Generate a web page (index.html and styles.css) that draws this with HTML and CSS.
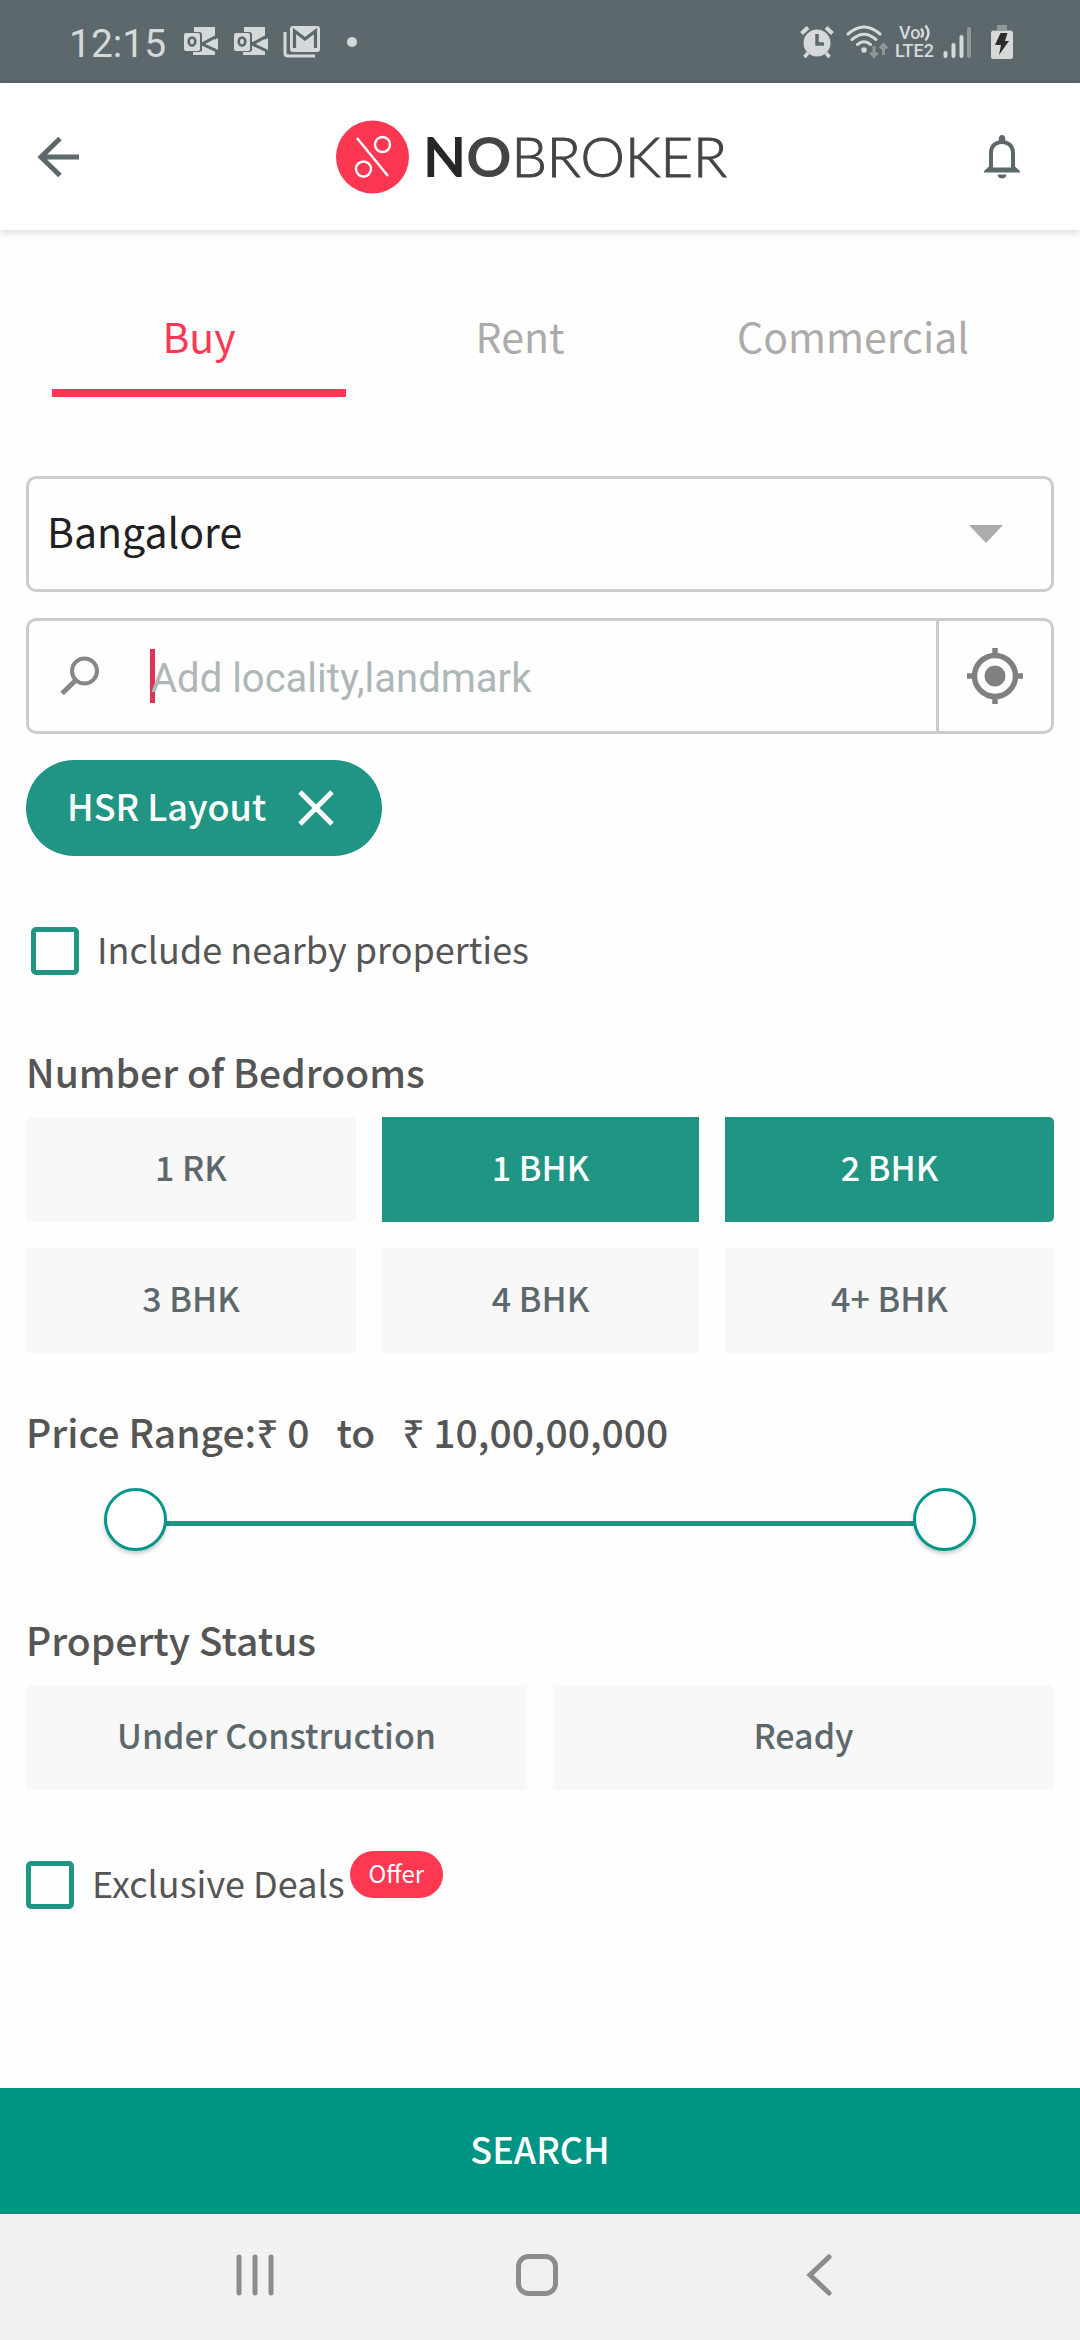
FILE: index.html
```html
<!DOCTYPE html>
<html lang="en">
<head>
<meta charset="utf-8">
<meta name="viewport" content="width=device-width, initial-scale=1">
<title>NoBroker - Search</title>
<link rel="stylesheet" href="styles.css">
</head>
<body>
<svg width="0" height="0" class="defs" aria-hidden="true">
  <symbol id="outlook" viewBox="0 0 36 32">
    <path d="M11 1H32V29H10V25H19V8H11z" fill="#d5d9da"/>
    <path d="M36 9L19 18L36 26" fill="none" stroke="#5d686c" stroke-width="3"/>
    <path d="M25 18L35 12V24z" fill="#d5d9da"/>
    <rect x="0" y="6" width="19" height="20" rx="3" fill="#5d686c"/>
    <rect x="1" y="7" width="16" height="18" rx="2" fill="#d5d9da"/>
    <ellipse cx="9" cy="15.500" rx="3.300" ry="4" fill="none" stroke="#5d686c" stroke-width="2.600"/>
  </symbol>
</svg>
<div class="app">
  <div class="status">
    <div class="status-left">
      <span class="clock">12:15</span>
      <svg class="notif" width="36" height="32" viewBox="0 0 36 32" aria-hidden="true"><use href="#outlook"/></svg>
      <svg class="notif" width="36" height="32" viewBox="0 0 36 32" aria-hidden="true"><use href="#outlook"/></svg>
      <svg class="gmail" width="38" height="34" viewBox="0 0 38 34" aria-hidden="true">
        <path d="M2 7v21q0 3 3 3h27" fill="none" stroke="#d5d9da" stroke-width="3"/>
        <rect x="7" y="1" width="30" height="26" rx="3" fill="#d5d9da"/>
        <path d="M11.500 23V6L22 14L32.500 6V23" fill="none" stroke="#5d686c" stroke-width="3.200"/>
      </svg>
      <span class="dot"></span>
    </div>
    <div class="status-right">
      <svg width="34" height="34" viewBox="0 0 34 34" aria-hidden="true">
        <path d="M8 28L4.500 32M26 28L29.500 32" stroke="#d5d9da" stroke-width="3.500"/>
        <circle cx="17" cy="18" r="13.500" fill="#d5d9da"/>
        <path d="M1.500 8.500L8 2.500M32.500 8.500L26 2.500" stroke="#d5d9da" stroke-width="4"/>
        <path d="M17 9V19H24" fill="none" stroke="#5d686c" stroke-width="3.500"/>
      </svg>
      <svg class="wifi" width="42" height="34" viewBox="0 0 42 34" aria-hidden="true">
        <g fill="none" stroke="#d5d9da" stroke-width="3" stroke-linecap="round">
          <path d="M2 9Q18-5 34 9M6 14.500Q18 4 30 14.500M11.500 19.500Q18 14 24.500 19.500"/>
        </g>
        <circle cx="18" cy="25" r="2.800" fill="#d5d9da"/>
        <path d="M28 21v10M24.500 27.500l3.500 4l3.500-4M37.500 30V20M34 23.500l3.500-4l3.500 4" fill="none" stroke="#8f9799" stroke-width="3"/>
      </svg>
      <span class="lte"><span class="volte">Vo<svg width="11" height="18" viewBox="0 0 11 18" aria-hidden="true"><path d="M1 4.500q4 4.500 0 9M5.500 1.500q6 7.500 0 15" fill="none" stroke="#d5d9da" stroke-width="2.500"/></svg></span><span>LTE2</span></span>
      <svg class="signal" width="28" height="34" viewBox="0 0 28 34" aria-hidden="true">
        <g stroke-width="4" stroke-linecap="round">
          <path d="M2.500 28v3M10.500 20v11M18.500 12v19" stroke="#d5d9da"/>
          <path d="M26 4v27" stroke="#8f9799"/>
        </g>
      </svg>
      <svg class="battery" width="22" height="34" viewBox="0 0 22 34" aria-hidden="true">
        <path d="M6 0h10v5h5v4H1V5h5z" fill="#8f9799"/>
        <rect x="0" y="6" width="22" height="28" rx="2" fill="#d5d9da"/>
        <path d="M9.500 8h7l-2.500 8h4L8 30l2-10H4z" fill="#2b2b2b"/>
      </svg>
    </div>
  </div>

  <header class="header">
    <button class="icon-btn" type="button" aria-label="Back">
      <svg width="42" height="42" viewBox="0 0 42 42"><path d="M23 2.500L4 21L23 39.500M4 21H42" fill="none" stroke="#5d686c" stroke-width="5"/></svg>
    </button>
    <div class="brand">
      <svg width="73" height="74" viewBox="0 0 73 74" aria-hidden="true">
        <circle cx="36.500" cy="37" r="36.500" fill="#fd3752"/>
        <g fill="none" stroke="#fff" stroke-width="2.400"><path d="M21 18L52 56"/><circle cx="46.500" cy="24.500" r="7.500"/><circle cx="27.500" cy="49" r="7.500"/></g>
      </svg>
      <span class="brand-name"><b class="brand-n">N</b><b class="brand-o">O</b>BROKER</span>
    </div>
    <button class="icon-btn" type="button" aria-label="Notifications">
      <svg width="36" height="44" viewBox="0 0 36 44"><path fill="#5d686c" fill-rule="evenodd" d="M18 0c2 0 3.200 1.500 3.200 3.500V5.500C27 6.500 31 11 31 18V31.500L36 36V37.500H0V36L5 31.500V18C5 11 9 6.500 14.800 5.500V3.500C14.800 1.500 16 0 18 0zM9 32.500H27V18C27 12.500 23.500 9 18 9S9 12.500 9 18zM13.500 39.500H22.500C22 42.500 20 43.500 18 43.500S14 42.500 13.500 39.500z"/></svg>
    </button>
  </header>

  <main class="content">
    <div class="tabs" role="tablist">
      <button class="tab tab-active" type="button" role="tab" aria-selected="true">Buy</button>
      <button class="tab" type="button" role="tab" aria-selected="false">Rent</button>
      <button class="tab" type="button" role="tab" aria-selected="false">Commercial</button>
    </div>

    <div class="field city">
      <select class="city-select" aria-label="City"><option>Bangalore</option></select>
      <svg width="34" height="18" viewBox="0 0 34 18" aria-hidden="true"><path d="M0 0H34L17 18z" fill="#acacac"/></svg>
    </div>

    <div class="field locality">
      <svg width="40" height="40" viewBox="0 0 40 40" aria-hidden="true"><circle cx="24.500" cy="15" r="12.500" fill="none" stroke="#85868a" stroke-width="4"/><path d="M15.500 24.500L2 37.500" stroke="#85868a" stroke-width="5"/></svg>
      <span class="caret"></span>
      <input class="locality-input" type="text" aria-label="Locality" placeholder="Add locality,landmark">
      <button class="locate" type="button" aria-label="Use my location">
        <svg width="56" height="56" viewBox="0 0 56 56"><g fill="none" stroke="#808080" stroke-width="5.500"><circle cx="28" cy="28" r="20.500"/><path d="M28 0V7M28 49V56M0 28H7M49 28H56"/></g><circle cx="28" cy="28" r="10.500" fill="#808080"/></svg>
      </button>
    </div>

    <button class="chip" type="button">
      <span>HSR Layout</span>
      <svg width="36" height="36" viewBox="0 0 36 36" aria-label="Remove"><path d="M2 2L34 34M34 2L2 34" stroke="#fff" stroke-width="5"/></svg>
    </button>

    <label class="check nearby"><input type="checkbox"><span>Include nearby properties</span></label>

    <h2 class="heading bedrooms-heading">Number of Bedrooms</h2>
    <div class="options three">
      <button class="option first" type="button" aria-pressed="false">1 RK</button>
      <button class="option" type="button" aria-pressed="true">1 BHK</button>
      <button class="option last" type="button" aria-pressed="true">2 BHK</button>
      <button class="option first" type="button" aria-pressed="false">3 BHK</button>
      <button class="option" type="button" aria-pressed="false">4 BHK</button>
      <button class="option last" type="button" aria-pressed="false">4+ BHK</button>
    </div>

    <h2 class="heading price-heading">Price Range:₹ 0<span class="to">to</span>₹ 10,00,00,000</h2>
    <div class="slider">
      <input type="range" aria-label="Minimum price" min="0" max="100000000" value="0">
      <input type="range" aria-label="Maximum price" min="0" max="100000000" value="100000000">
    </div>

    <h2 class="heading status-heading">Property Status</h2>
    <div class="options two">
      <button class="option first" type="button" aria-pressed="false">Under Construction</button>
      <button class="option last" type="button" aria-pressed="false">Ready</button>
    </div>

    <div class="deals">
      <label class="check"><input type="checkbox"><span>Exclusive Deals</span></label>
      <span class="offer">Offer</span>
    </div>
  </main>

  <button class="search" type="button">SEARCH</button>

  <nav class="sysnav">
    <button type="button" aria-label="Recent apps"><svg width="42" height="42" viewBox="0 0 42 42"><path d="M5 3V39M21 3V39M37 3V39" stroke="#8c8c8c" stroke-width="5" stroke-linecap="round"/></svg></button>
    <button type="button" aria-label="Home"><svg width="42" height="42" viewBox="0 0 42 42"><rect x="2.500" y="2.500" width="37" height="37" rx="10" fill="none" stroke="#8c8c8c" stroke-width="5"/></svg></button>
    <button type="button" aria-label="Back"><svg width="42" height="42" viewBox="0 0 42 42"><path d="M31 3L12 21L31 39" fill="none" stroke="#8c8c8c" stroke-width="5" stroke-linecap="round"/></svg></button>
  </nav>
</div>
</body>
</html>
```
FILE: styles.css
```css
* { box-sizing: border-box; }

body {
  margin: 0;
  background: #fefefe;
  color: #555;
  font-family: "Noto Sans CJK SC", "Noto Sans", sans-serif;
}

button, input, select {
  margin: 0;
  padding: 0;
  border: 0;
  background: none;
  font: inherit;
  color: inherit;
}

svg { display: block; flex: none; }
.defs { position: absolute; }

.app {
  display: flex;
  flex-direction: column;
  min-height: 100vh;
}

/* Device status bar */
.status {
  display: flex;
  justify-content: space-between;
  height: 83px;
  padding: 0 67px 0 69px;
  background: #5d686c;
  color: #d5d9da;
  font-family: Roboto, sans-serif;
}
.status-left, .status-right { display: flex; align-items: center; }
.clock { width: 114px; font-size: 39px; line-height: 48px; padding-top: 4px; }
.notif { margin-right: 14px; }
.gmail { margin-right: 26px; }
.dot { width: 10px; height: 10px; border-radius: 5px; background: #d5d9da; }
.wifi { margin-left: 12px; }
.lte {
  display: flex;
  flex-direction: column;
  width: 48px;
  margin-left: 7px;
  font-size: 18px;
  font-weight: 500;
  line-height: 18px;
}
.volte { display: flex; padding-left: 4px; }
.battery { margin-left: 20px; }

/* App header */
.header {
  display: flex;
  align-items: center;
  justify-content: space-between;
  height: 147px;
  padding: 0 60px 0 37px;
  background: #fff;
  box-shadow: 0 2px 8px rgba(0, 0, 0, 0.16);
}
.brand { display: flex; align-items: center; gap: 14px; }
.brand-name {
  padding-bottom: 2px;
  font-family: Lato, sans-serif;
  font-size: 56px;
  font-weight: 300;
  line-height: 64px;
  color: #444;
  -webkit-text-stroke: 1px #444;
}
.brand-name b { font-weight: 700; -webkit-text-stroke: 0; }
.brand-n { color: #262626; }

/* Search form */
.content {
  display: flex;
  flex-direction: column;
  flex: 1;
  padding: 75px 26px 60px;
}
.tabs {
  display: grid;
  grid-template-columns: 294fr 348fr 318fr;
  padding: 0 42px 0 26px;
}
.tab {
  padding-bottom: 24px;
  border-bottom: 8px solid transparent;
  font-size: 41px;
  line-height: 60px;
  color: #aeaaaa;
}
.tab-active { color: #fb3753; border-color: #fb3753; }

.field {
  display: flex;
  align-items: center;
  height: 116px;
  border: 3px solid #ccc;
  border-radius: 10px;
}
.city { margin-top: 79px; padding-right: 48px; }
.city-select {
  flex: 1;
  height: 110px;
  padding: 0 0 8px 18px;
  appearance: none;
  font-size: 41px;
  color: #212121;
}
.locality { margin-top: 26px; padding-left: 31px; }
.caret { width: 5px; height: 54px; margin: 0 -4px 0 50px; background: #da3553; }
.locality-input {
  flex: 1;
  min-width: 0;
  height: 110px;
  padding-top: 4px;
  font-family: Roboto, sans-serif;
  font-size: 40px;
}
.locality-input::placeholder { color: #afb6b8; }
.locate {
  display: flex;
  align-items: center;
  justify-content: center;
  width: 115px;
  height: 110px;
  border-left: 3px solid #ccc;
}

.chip {
  display: flex;
  align-items: center;
  align-self: flex-start;
  gap: 32px;
  height: 96px;
  margin-top: 26px;
  padding: 0 48px 0 41px;
  border-radius: 48px;
  background: #209584;
  color: #fff;
  font-size: 36px;
  font-weight: 500;
}
.chip span { padding-bottom: 6px; }

.check {
  display: flex;
  align-items: center;
  gap: 18px;
  height: 48px;
  font-size: 36px;
}
.check span { padding-bottom: 6px; }
.check input {
  width: 48px;
  height: 48px;
  border: 5px solid #209584;
  border-radius: 5px;
  appearance: none;
}
.nearby { margin-top: 71px; padding-left: 5px; }

.heading {
  margin: 0 0 18px;
  font-size: 39px;
  font-weight: 500;
  line-height: 56px;
}
.bedrooms-heading { margin-top: 68px; }
.price-heading { margin-top: 50px; margin-bottom: 29px; }
.status-heading { margin-top: 60px; }
.to { margin: 0 27px; }

.options { display: grid; gap: 26px; }
.three { grid-template-columns: 330fr 317fr 329fr; }
.two { grid-template-columns: 1fr 1fr; }
.option {
  height: 105px;
  padding-bottom: 6px;
  background: #f8f8f8;
  color: #5d686c;
  font-size: 34px;
  font-weight: 500;
}
.option[aria-pressed="true"] { background: #209584; color: #fff; }
.first { border-radius: 5px 0 0 5px; }
.last { border-radius: 0 5px 5px 0; }

/* Two range inputs share one track */
.slider {
  display: grid;
  height: 63px;
  margin: 0 78px;
  background: linear-gradient(#209584, #209584) center 33px / calc(100% - 20px) 5px no-repeat;
}
.slider input {
  grid-area: 1 / 1;
  width: 100%;
  height: 63px;
  appearance: none;
  pointer-events: none;
}
.slider input::-webkit-slider-thumb {
  width: 63px;
  height: 63px;
  border: 3px solid #009688;
  border-radius: 50%;
  background: #fff;
  box-shadow: 0 3px 4px rgba(0, 0, 0, 0.2);
  appearance: none;
  pointer-events: auto;
}

.deals { display: flex; gap: 5px; margin-top: 71px; }
.offer {
  height: 47px;
  margin-top: -10px;
  padding: 0 19px;
  border-radius: 24px;
  background: #ff3852;
  color: #fff;
  font-size: 24px;
  line-height: 43px;
}

.search {
  height: 126px;
  padding-bottom: 6px;
  background: #009485;
  color: #fff;
  font-size: 36px;
  font-weight: 500;
}

/* Device navigation bar */
.sysnav {
  display: grid;
  grid-template-columns: repeat(3, 282px);
  justify-content: center;
  height: 126px;
  padding: 0 6px 4px 0;
  background: #f1f1f1;
}
.sysnav button {
  display: flex;
  align-items: center;
  justify-content: center;
}
```
